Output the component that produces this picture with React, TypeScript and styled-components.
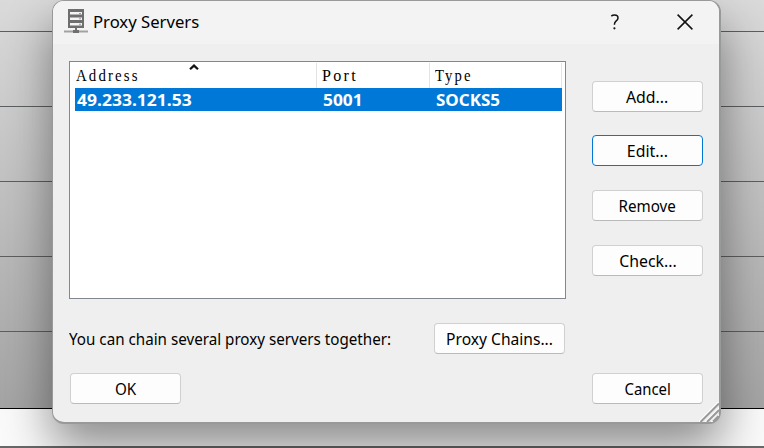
import React from "react";
import styled, { createGlobalStyle } from "styled-components";

const Global = createGlobalStyle`
  * { box-sizing: border-box; }
  body { margin: 0; overflow: hidden; font-family: "Noto Sans", sans-serif; color: #000; }
`;

const Desktop = styled.div`
  width: 764px;
  height: 448px;
  padding-left: 52px;
  overflow: hidden;
  background:
    linear-gradient(#5c5f61, #5c5f61) 0 31px / 100% 1px no-repeat,
    linear-gradient(#5c5f61, #5c5f61) 0 106px / 100% 1px no-repeat,
    linear-gradient(#5c5f5e, #5c5f5e) 0 181px / 100% 1px no-repeat,
    linear-gradient(#5c5f5e, #5c5f5e) 0 256px / 100% 1px no-repeat,
    linear-gradient(#5c5f5e, #5c5f5e) 0 331px / 100% 1px no-repeat,
    linear-gradient(#000, #000) 0 408px / 100% 1px no-repeat,
    linear-gradient(#66686a, #66686a) 0 446px / 100% 2px no-repeat,
    linear-gradient(#fafafa, #fafafa) 0 409px / 100% 37px no-repeat,
    linear-gradient(#dadada, #a4a4a4 408px);
`;

const Dialog = styled.section`
  position: relative;
  display: flex;
  flex-direction: column;
  width: 669px;
  height: 424px;
  border: solid #989a99;
  border-width: 1px 2px 2px 1px;
  border-radius: 12px;
  background: #efefef;
  box-shadow: 0 24px 48px rgba(0, 0, 0, 0.44);
`;

const TitleBar = styled.header`
  display: flex;
  align-items: center;
  flex: none;
  height: 43px;
  padding: 0 26.5px 2px 11px;
  border-radius: 11px 11px 0 0;
  background: #f3f3f3;
`;

const Title = styled.h1`
  flex: 1;
  margin: 0 0 0 5px;
  font-size: 17px;
  font-weight: 400;
  line-height: 24px;
`;

const TitleButton = styled.button`
  display: flex;
  align-items: center;
  justify-content: center;
  width: 16px;
  height: 16px;
  padding: 0;
  border: 0;
  margin-left: 54px;
  background: none;
`;

const Label = styled.span<{ $scale?: number; $origin?: string }>`
  display: inline-block;
  white-space: nowrap;
  transform: scaleX(${(p) => p.$scale ?? 0.92});
  transform-origin: ${(p) => p.$origin ?? "left"};
`;

const Body = styled.div`
  display: flex;
  justify-content: space-between;
  height: 255px;
  padding: 17px 16px 0;
`;

const Table = styled.div`
  width: 497px;
  height: 238px;
  padding: 1px 3px 0 5px;
  border: 1px solid #828790;
  background: #fff;
`;

const Columns = styled.div`
  display: grid;
  grid-template-columns: 242px 113px 132px;
`;

const HeaderRow = styled(Columns)`
  height: 25px;
  font: 17.5px/25px "Liberation Serif", serif;
`;

const HeaderCell = styled.div`
  position: relative;
  padding-left: 1px;
  border-right: 1px solid #e3e3e3;
  letter-spacing: 2.5px;
  & + & { padding-left: 5px; }
`;

const SortMark = styled.svg`
  position: absolute;
  left: 114px;
  top: 0;
`;

const Row = styled(Columns)`
  height: 23px;
  background: #0078d7;
  color: #fff;
  font-size: 16.5px;
  font-weight: 700;
  line-height: 23px;
`;

const Cell = styled.div`
  padding-left: 2px;
  & + & { padding-left: 6px; }
`;

const Actions = styled.div`
  display: flex;
  flex-direction: column;
  gap: 24px;
  padding-top: 20px;
  & > :first-child { margin-bottom: -1px; }
`;

const Button = styled.button<{ $width?: number; $focus?: boolean }>`
  display: flex;
  align-items: center;
  justify-content: center;
  width: ${(p) => p.$width ?? 111}px;
  height: 31px;
  padding: 1px 0 0;
  border: 1px solid ${(p) => (p.$focus ? "#0078d4" : "#d0d0d0")};
  border-bottom-color: ${(p) => (p.$focus ? "#0078d4" : "#bababa")};
  border-radius: 4px;
  background: #fdfdfd;
  color: #000;
  font: 16.5px/24px "Noto Sans", sans-serif;
`;

const ChainRow = styled.div`
  display: flex;
  align-items: center;
  justify-content: space-between;
  height: 31px;
  margin: 24px 154px 0 16px;
  font-size: 16.5px;
`;

const Footer = styled.footer`
  display: flex;
  justify-content: space-between;
  padding: 19px 16px 0 17px;
`;

const Grip = styled.svg`
  position: absolute;
  right: 0;
  bottom: 0;
`;

const ServerIcon = () => (
  <svg width="24" height="25" viewBox="0 0 24 25">
    <path d="M4 0h16v19H4z" fill="#6e6e6e" />
    <path d="M6 3h12v2.5H6zM6 8.5h12V11H6zM6 14h12v2.5H6z" fill="#f4f4f4" />
    <path d="M15 4h2v1h-2zM15 9.3h2v1h-2zM15 14.8h2v1h-2z" fill="#999" />
    <path d="M0 21.5h24v2H0z" fill="#a2a2a2" />
    <path d="M11 19h2v2h2v3H9v-3h2z" fill="#707070" />
  </svg>
);

const actions = ["Add...", "Edit...", "Remove", "Check..."];

export default function App() {
  return (
    <>
      <Global />
      <Desktop>
        <Dialog>
          <TitleBar>
            <ServerIcon />
            <Title><Label $scale={0.98}>Proxy Servers</Label></Title>
            <TitleButton aria-label="Help">
              <svg width="10" height="16" viewBox="0 0 10 16">
                <path d="M1.3 2.1Q2.5 1 4.6 1Q8 1 8 4Q8 5.6 6 7.2Q4.4 8.5 4.4 10.8" fill="none" stroke="#111" strokeWidth="1.5" />
                <circle cx="4.4" cy="14.3" r="1.1" fill="#111" />
              </svg>
            </TitleButton>
            <TitleButton aria-label="Close">
              <svg width="16" height="16" viewBox="0 0 16 16">
                <path d="M.6.6l14.8 14.8M15.4.6L.6 15.4" stroke="#111" strokeWidth="1.5" />
              </svg>
            </TitleButton>
          </TitleBar>
          <Body>
            <Table>
              <HeaderRow>
                <HeaderCell>
                  <Label $scale={0.85}>Address</Label>
                  <SortMark width="10" height="8" viewBox="0 0 10 8">
                    <path d="M1 6.2L5 2.6L9 6.2" fill="none" stroke="#111" strokeWidth="2.2" />
                  </SortMark>
                </HeaderCell>
                <HeaderCell><Label $scale={0.92}>Port</Label></HeaderCell>
                <HeaderCell><Label $scale={0.84}>Type</Label></HeaderCell>
              </HeaderRow>
              <Row>
                <Cell><Label $scale={1.06}>49.233.121.53</Label></Cell>
                <Cell><Label $scale={1.05}>5001</Label></Cell>
                <Cell><Label $scale={1.03}>SOCKS5</Label></Cell>
              </Row>
            </Table>
            <Actions>
              {actions.map((name) => (
                <Button key={name} $focus={name === "Edit..."}>
                  <Label $scale={name.endsWith("...") ? 0.96 : 0.92} $origin="center">{name}</Label>
                </Button>
              ))}
            </Actions>
          </Body>
          <ChainRow>
            <Label $scale={0.92}>You can chain several proxy servers together:</Label>
            <Button $width={131}><Label $scale={0.945} $origin="center">Proxy Chains...</Label></Button>
          </ChainRow>
          <Footer>
            <Button><Label $origin="center">OK</Label></Button>
            <Button><Label $scale={0.9} $origin="center">Cancel</Label></Button>
          </Footer>
          <Grip width="20" height="20" viewBox="0 0 20 20">
            <path d="M0 19.5L20 -.5M6.5 20L20 6.5M12 20.5L20 12.5" stroke="#fff" strokeWidth="1.5" />
            <path d="M1.5 20L20 1.5M8 20L20 8M14 19.5L19.5 14" stroke="#999" strokeWidth="2" />
          </Grip>
        </Dialog>
      </Desktop>
    </>
  );
}
